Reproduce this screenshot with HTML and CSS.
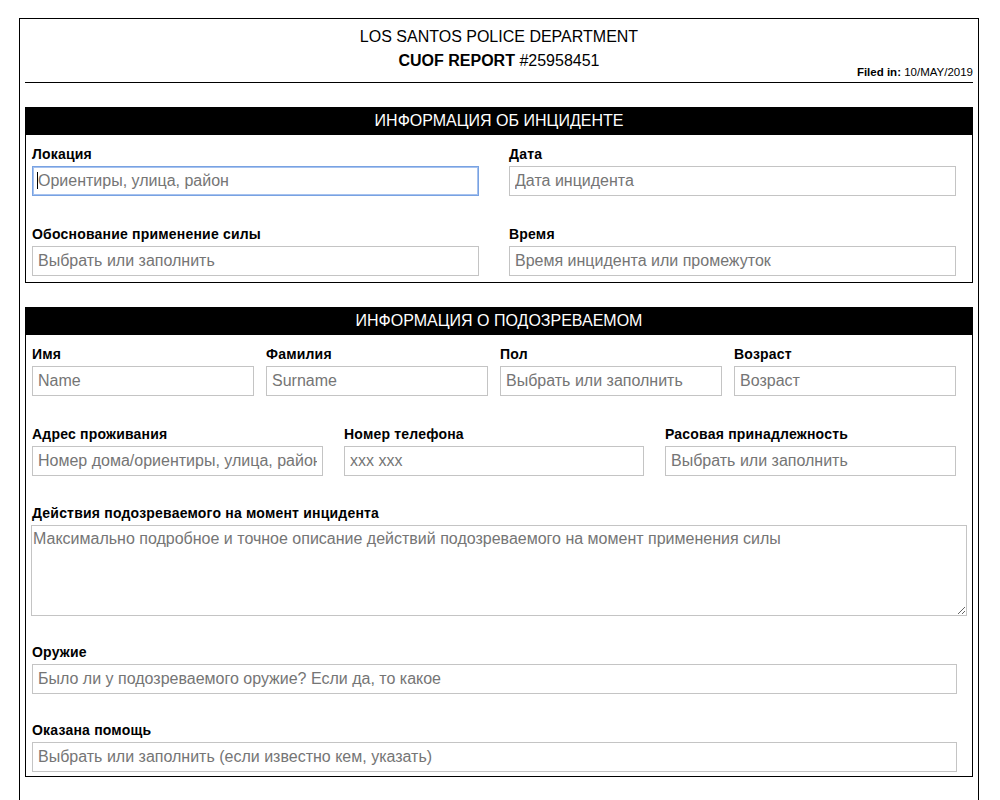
FILE: index.html
```html
<!DOCTYPE html>
<html lang="ru">
<head>
<meta charset="utf-8">
<title>CUOF REPORT</title>
<link rel="stylesheet" href="styles.css">
</head>
<body>
<div class="page">
  <header class="doc-head">
    <div class="spacer"></div>
    <div class="doc-title">
      <div class="dept">LOS SANTOS POLICE DEPARTMENT</div>
      <div class="report"><b>CUOF REPORT</b> #25958451</div>
    </div>
    <div class="filed"><b>Filed in:</b> 10/MAY/2019</div>
  </header>

  <section class="block">
    <div class="block-head">ИНФОРМАЦИЯ ОБ ИНЦИДЕНТЕ</div>
    <div class="block-body">
      <div class="row cols-2">
        <div class="field">
          <label class="lbl">Локация</label>
          <input class="inp focused" type="text" placeholder="Ориентиры, улица, район">
        </div>
        <div class="field">
          <label class="lbl">Дата</label>
          <input class="inp" type="text" placeholder="Дата инцидента">
        </div>
      </div>
      <div class="row cols-2">
        <div class="field">
          <label class="lbl">Обоснование применение силы</label>
          <input class="inp" type="text" placeholder="Выбрать или заполнить">
        </div>
        <div class="field">
          <label class="lbl">Время</label>
          <input class="inp" type="text" placeholder="Время инцидента или промежуток">
        </div>
      </div>
    </div>
  </section>

  <section class="block">
    <div class="block-head">ИНФОРМАЦИЯ О ПОДОЗРЕВАЕМОМ</div>
    <div class="block-body body-2">
      <div class="row cols-4">
        <div class="field">
          <label class="lbl">Имя</label>
          <input class="inp" type="text" placeholder="Name">
        </div>
        <div class="field">
          <label class="lbl">Фамилия</label>
          <input class="inp" type="text" placeholder="Surname">
        </div>
        <div class="field">
          <label class="lbl">Пол</label>
          <input class="inp" type="text" placeholder="Выбрать или заполнить">
        </div>
        <div class="field">
          <label class="lbl">Возраст</label>
          <input class="inp" type="text" placeholder="Возраст">
        </div>
      </div>
      <div class="row cols-3">
        <div class="field">
          <label class="lbl">Адрес проживания</label>
          <input class="inp" type="text" placeholder="Номер дома/ориентиры, улица, район">
        </div>
        <div class="field">
          <label class="lbl">Номер телефона</label>
          <input class="inp" type="text" placeholder="xxx xxx">
        </div>
        <div class="field">
          <label class="lbl">Расовая принадлежность</label>
          <input class="inp" type="text" placeholder="Выбрать или заполнить">
        </div>
      </div>
      <div class="row row-text">
        <div class="field">
          <label class="lbl">Действия подозреваемого на момент инцидента</label>
          <textarea class="area" placeholder="Максимально подробное и точное описание действий подозреваемого на момент применения силы"></textarea>
        </div>
      </div>
      <div class="row row-tight">
        <div class="field">
          <label class="lbl">Оружие</label>
          <input class="inp wide" type="text" placeholder="Было ли у подозреваемого оружие? Если да, то какое">
        </div>
      </div>
      <div class="row">
        <div class="field">
          <label class="lbl">Оказана помощь</label>
          <input class="inp wide" type="text" placeholder="Выбрать или заполнить (если известно кем, указать)">
        </div>
      </div>
    </div>
  </section>
</div>
</body>
</html>
```

FILE: styles.css
```css
* {
  box-sizing: border-box;
}

html, body {
  margin: 0;
  padding: 0;
  background: #fff;
}

body {
  font-family: "Liberation Sans", Arial, sans-serif;
  color: #000;
}

.page {
  width: 960px;
  margin: 18px 0 0 19px;
  border: 1px solid #000;
  border-bottom: none;
  padding: 6px 5px 40px 5px;
}

.doc-head {
  display: grid;
  grid-template-columns: 1fr auto 1fr;
  border-bottom: 1px solid #000;
}

.doc-title {
  text-align: center;
  font-size: 16px;
  line-height: 24px;
  margin-bottom: 9px;
}

.filed {
  justify-self: end;
  align-self: end;
  font-size: 11.5px;
  line-height: 14px;
  margin-bottom: 3px;
}

.block {
  border: 1px solid #000;
  margin-top: 24px;
}

.block-head {
  background: #000;
  color: #fff;
  text-align: center;
  font-size: 16px;
  line-height: 26px;
  padding-bottom: 1px;
}

.block-body {
  padding: 12px 16px 6px 6px;
}

.body-2 {
  padding-bottom: 4px;
}

.row {
  display: grid;
  margin-bottom: 31px;
}

.row:last-child {
  margin-bottom: 0;
}

.cols-2 {
  grid-template-columns: 1fr 1fr;
  column-gap: 30px;
}

.cols-4 {
  grid-template-columns: repeat(4, 1fr);
  column-gap: 12px;
}

.cols-3 {
  grid-template-columns: 291px 300px 291px;
  column-gap: 21px;
  margin-bottom: 30px;
}

.row-text {
  margin-bottom: 29px;
}

.row-tight {
  margin-bottom: 29px;
}

.field {
  min-width: 0;
}

.lbl {
  display: block;
  font-size: 14px;
  letter-spacing: 0.2px;
  line-height: 15px;
  font-weight: bold;
  margin-bottom: 4px;
  white-space: nowrap;
}

.inp {
  display: block;
  width: 100%;
  height: 30px;
  margin: 0;
  border: 1px solid #c4c4c4;
  border-radius: 0;
  padding: 0 5px;
  font-family: "Liberation Sans", Arial, sans-serif;
  font-size: 16px;
  color: #333;
  background: #fff;
  outline: none;
}

.inp::placeholder,
.area::placeholder {
  color: #757575;
  opacity: 1;
}

.inp.wide {
  width: calc(100% + 1px);
}

.inp.focused {
  border-color: #78a2e2;
  box-shadow: inset 0 0 0 1px #a6c2ef;
  background: #fff linear-gradient(#000, #000) no-repeat 4px 5px / 1px 17px;
}

.area {
  display: block;
  width: calc(100% + 12px);
  height: 91px;
  margin: 0 0 0 -1px;
  border: 1px solid #c4c4c4;
  border-radius: 0;
  padding: 4px 1px 1px;
  font-family: "Liberation Sans", Arial, sans-serif;
  font-size: 16px;
  color: #333;
  background: #fff;
  outline: none;
}
```
